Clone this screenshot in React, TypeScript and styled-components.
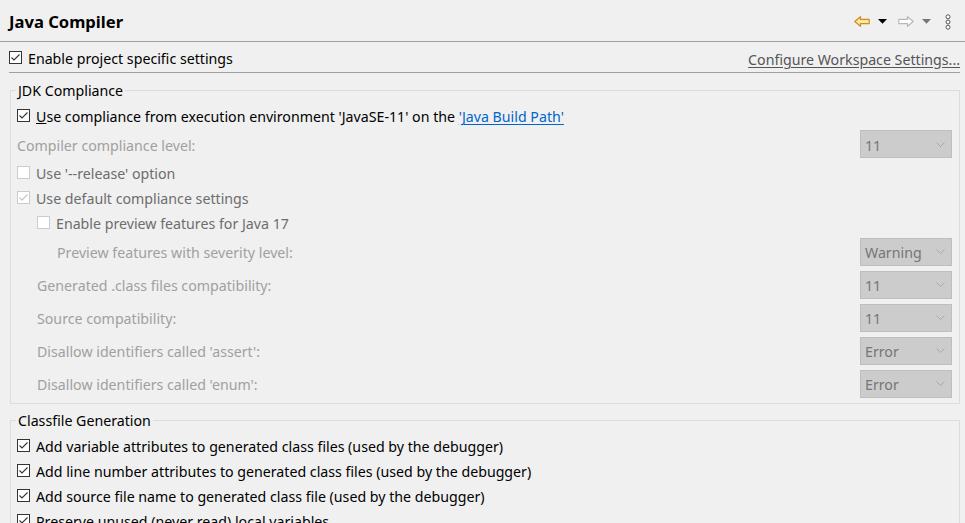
import React from 'react';
import styled, { createGlobalStyle } from 'styled-components';

const Global = createGlobalStyle`
  html, body { margin: 0; padding: 0; background: #f0f0f0; }
  body {
    font-family: "Noto Sans", "Open Sans", sans-serif;
    font-size: 14.2px;
    color: #000;
    overflow: hidden;
  }
  * { box-sizing: border-box; }
`;

const Page = styled.div`
  width: 965px;
  height: 523px;
  overflow: hidden;
  display: flex;
  flex-direction: column;
`;

const Header = styled.header`
  height: 42px;
  flex: none;
  display: flex;
  align-items: center;
  justify-content: space-between;
  padding: 0 14px 0 9px;
  border-bottom: 1px solid #a0a0a0;
`;

const Title = styled.h1`
  margin: 0;
  font-size: 16.6px;
  font-weight: 700;
  line-height: 20px;
  padding-top: 3px;
`;

const Tools = styled.div`
  display: flex;
  align-items: center;
  padding-top: 2px;
`;

const ToolIcon = styled.span<{ $gap?: number }>`
  display: inline-flex;
  margin-left: ${(p) => p.$gap ?? 0}px;
`;

const Body = styled.div`
  padding: 0 5px 0 9px;
  display: flex;
  flex-direction: column;
`;

const TopRow = styled.div`
  height: 31px;
  display: flex;
  align-items: center;
  justify-content: space-between;
  border-bottom: 1px solid #a0a0a0;
  padding-top: 1px;
`;

const Group = styled.fieldset<{ $top: number }>`
  margin: ${(p) => p.$top}px 0 0 1px;
  padding: 3px 7px 3px 6px;
  border: 1px solid #dcdcdc;
  display: flex;
  flex-direction: column;
  min-width: 0;
`;

const Legend = styled.legend`
  padding: 2px 2px 0;
  margin-left: -1px;
  line-height: 18px;
`;

const Row = styled.div<{ $h: number; $indent?: number }>`
  height: ${(p) => p.$h}px;
  flex: none;
  display: flex;
  align-items: center;
  padding-left: ${(p) => p.$indent ?? 0}px;
`;

const CheckLabel = styled.label<{ $tone?: 'normal' | 'dim' }>`
  display: flex;
  align-items: center;
  gap: 6px;
  white-space: nowrap;
  color: ${(p) => (p.$tone === 'dim' ? '#6d6d6d' : '#000')};
`;

const LabelText = styled.span`
  padding-top: 2px;
`;

const Box = styled.span<{ $disabled?: boolean }>`
  width: 13px;
  height: 13px;
  flex: none;
  display: inline-flex;
  border: 1px solid ${(p) => (p.$disabled ? '#cccccc' : '#333333')};
  background: #fff;
`;

const Text = styled.span<{ $disabled?: boolean }>`
  white-space: nowrap;
  padding-top: 2px;
  color: ${(p) => (p.$disabled ? '#a0a0a0' : '#000')};
`;

const WorkspaceLink = styled.a`
  color: #555;
  text-decoration: underline;
  text-underline-offset: 2px;
  white-space: nowrap;
  padding-top: 3px;
  cursor: pointer;
`;

const InlineLink = styled.a`
  color: #0066cc;
  text-decoration: underline;
  text-underline-offset: 2px;
  cursor: pointer;
`;

const Select = styled.div`
  margin-left: auto;
  width: 92px;
  height: 28px;
  flex: none;
  display: flex;
  align-items: center;
  justify-content: space-between;
  padding: 0 6px 0 4px;
  background: #cccccc;
  border: 1px solid #bebebe;
  color: #767676;
`;

const SelectValue = styled.span`
  padding-top: 2px;
`;

function Check({ checked, disabled }: { checked?: boolean; disabled?: boolean }) {
  return (
    <Box $disabled={disabled}>
      {checked && (
        <svg width="11" height="11" viewBox="0 0 11 11">
          <polyline
            points="1.5,5.5 4,8 9.5,2.5"
            fill="none"
            stroke={disabled ? '#c4c4c4' : '#333'}
            strokeWidth="1.1"
          />
        </svg>
      )}
    </Box>
  );
}

function CheckRow({
  label,
  checked,
  disabled,
  indent,
}: {
  label: React.ReactNode;
  checked?: boolean;
  disabled?: boolean;
  indent?: number;
}) {
  return (
    <Row $h={25} $indent={indent}>
      <CheckLabel $tone={disabled ? 'dim' : 'normal'}>
        <Check checked={checked} disabled={disabled} />
        <LabelText>{label}</LabelText>
      </CheckLabel>
    </Row>
  );
}

function Chevron() {
  return (
    <svg width="9" height="5" viewBox="0 0 9 5">
      <polyline points="0.5,0.5 4.5,4.5 8.5,0.5" fill="none" stroke="#a8a8a8" strokeWidth="1" />
    </svg>
  );
}

function SelectRow({ label, value, indent, h }: { label: string; value: string; indent?: number; h: number }) {
  return (
    <Row $h={h} $indent={indent}>
      <Text $disabled>{label}</Text>
      <Select>
        <SelectValue>{value}</SelectValue>
        <Chevron />
      </Select>
    </Row>
  );
}

function BackArrow() {
  return (
    <svg width="16" height="11" viewBox="0 0 16 11">
      <polygon
        points="0.8,5.5 6.5,0.7 6.5,3.3 15.2,3.3 15.2,7.7 6.5,7.7 6.5,10.3"
        fill="#fde9a6"
        stroke="#cf8d1c"
        strokeWidth="1.2"
        strokeLinejoin="round"
      />
    </svg>
  );
}

function ForwardArrow() {
  return (
    <svg width="16" height="11" viewBox="0 0 16 11">
      <polygon
        points="15.2,5.5 9.5,0.7 9.5,3.3 0.8,3.3 0.8,7.7 9.5,7.7 9.5,10.3"
        fill="#fff"
        stroke="#b8b8b8"
        strokeWidth="1.2"
        strokeLinejoin="round"
      />
    </svg>
  );
}

function Triangle({ color }: { color: string }) {
  return (
    <svg width="9" height="5" viewBox="0 0 9 5">
      <polygon points="0,0 9,0 4.5,4.8" fill={color} />
    </svg>
  );
}

function Dots() {
  return (
    <svg width="6" height="16" viewBox="0 0 6 16">
      {[2.8, 8, 13.2].map((cy) => (
        <circle key={cy} cx="3" cy={cy} r="2" fill="#fff" stroke="#555" strokeWidth="1" />
      ))}
    </svg>
  );
}

export default function App() {
  return (
    <>
      <Global />
      <Page>
        <Header>
          <Title>Java Compiler</Title>
          <Tools>
            <ToolIcon>
              <BackArrow />
            </ToolIcon>
            <ToolIcon $gap={8}>
              <Triangle color="#000" />
            </ToolIcon>
            <ToolIcon $gap={11}>
              <ForwardArrow />
            </ToolIcon>
            <ToolIcon $gap={8}>
              <Triangle color="#777" />
            </ToolIcon>
            <ToolIcon $gap={14}>
              <Dots />
            </ToolIcon>
          </Tools>
        </Header>
        <Body>
          <TopRow>
            <CheckLabel>
              <Check checked />
              <LabelText>Enable project specific settings</LabelText>
            </CheckLabel>
            <WorkspaceLink>Configure Workspace Settings...</WorkspaceLink>
          </TopRow>

          <Group $top={7}>
            <Legend>JDK Compliance</Legend>
            <CheckRow
              checked
              label={
                <>
                  <u>U</u>se compliance from execution environment 'JavaSE-11' on the{' '}
                  <InlineLink>'Java Build Path'</InlineLink>
                </>
              }
            />
            <SelectRow h={32} label="Compiler compliance level:" value="11" />
            <CheckRow disabled label="Use '--release' option" />
            <CheckRow disabled checked label="Use default compliance settings" />
            <CheckRow disabled indent={20} label="Enable preview features for Java 17" />
            <SelectRow h={33} indent={40} label="Preview features with severity level:" value="Warning" />
            <SelectRow h={33} indent={20} label="Generated .class files compatibility:" value="11" />
            <SelectRow h={33} indent={20} label="Source compatibility:" value="11" />
            <SelectRow h={33} indent={20} label="Disallow identifiers called 'assert':" value="Error" />
            <SelectRow h={33} indent={20} label="Disallow identifiers called 'enum':" value="Error" />
          </Group>

          <Group $top={6}>
            <Legend>Classfile Generation</Legend>
            <CheckRow checked label="Add variable attributes to generated class files (used by the debugger)" />
            <CheckRow checked label="Add line number attributes to generated class files (used by the debugger)" />
            <CheckRow checked label="Add source file name to generated class file (used by the debugger)" />
            <CheckRow checked label="Preserve unused (never read) local variables" />
            <CheckRow checked label="Inline finally blocks (larger class files, but improved performance)" />
            <CheckRow label="Store information about method parameters (usable via reflection)" />
          </Group>
        </Body>
      </Page>
    </>
  );
}
